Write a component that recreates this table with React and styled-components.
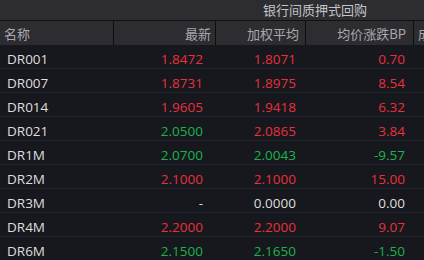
import React from "react";
import styled, { createGlobalStyle } from "styled-components";

const GlobalStyle = createGlobalStyle`
  html, body {
    margin: 0;
    padding: 0;
    background: #16181d;
    overflow: hidden;
  }
  body {
    font-family: "Open Sans", "Noto Sans CJK SC", sans-serif;
  }
`;

const COLS = "114px 102px 90px 108px 120px";

const Board = styled.div`
  width: 424px;
  height: 260px;
  overflow: hidden;
  background: #16181d;
`;

const GroupBar = styled.div`
  display: grid;
  grid-template-columns: 216px 198px 1fr;
  height: 20px;
  background: #2c2c31;
  border-bottom: 1px solid #111114;
`;

const GroupLabel = styled.div`
  grid-column: ${(p) => p.$col};
  display: flex;
  align-items: center;
  justify-content: center;
  font-family: "Noto Sans CJK SC", sans-serif;
  font-size: 13px;
  color: #c4c4c6;
  line-height: 20px;
`;

const HeadRow = styled.div`
  display: grid;
  grid-template-columns: ${COLS};
  height: 24px;
  background: #2c2c31;
`;

const HeadCell = styled.div`
  display: flex;
  align-items: center;
  justify-content: ${(p) => (p.$left ? "flex-start" : "flex-end")};
  padding: ${(p) => (p.$left ? "0 0 0 4px" : `0 ${p.$pad || 7}px 0 0`)};
  border-right: 1px solid #0e0e10;
  font-family: "Noto Sans CJK SC", sans-serif;
  font-size: 13px;
  color: #a9a9ad;
  white-space: nowrap;
  overflow: hidden;
  box-sizing: border-box;
`;

const Row = styled.div`
  display: grid;
  grid-template-columns: ${COLS};
  height: 24px;
  border-bottom: 1px solid #20232a;
  box-sizing: border-box;
`;

const Cell = styled.div`
  display: flex;
  align-items: center;
  justify-content: ${(p) => (p.$left ? "flex-start" : "flex-end")};
  padding: ${(p) => (p.$left ? "4px 0 0 7px" : `4px ${p.$pad || 10}px 0 0`)};
  font-size: 13.5px;
  color: ${(p) =>
    p.$tone === "up" ? "#e9303c" : p.$tone === "down" ? "#1fb24c" : "#dedede"};
  white-space: nowrap;
  box-sizing: border-box;
`;

const tone = (v) => (v > 0 ? "up" : v < 0 ? "down" : "flat");

const rows = [
  ["DR001", "1.8472", "1.8071", "0.70", 1, 1],
  ["DR007", "1.8731", "1.8975", "8.54", 1, 1],
  ["DR014", "1.9605", "1.9418", "6.32", 1, 1],
  ["DR021", "2.0500", "2.0865", "3.84", -1, 1],
  ["DR1M", "2.0700", "2.0043", "-9.57", -1, -1],
  ["DR2M", "2.1000", "2.1000", "15.00", 1, 1],
  ["DR3M", "-", "0.0000", "0.00", 0, 0],
  ["DR4M", "2.2000", "2.2000", "9.07", 1, 1],
  ["DR6M", "2.1500", "2.1650", "-1.50", -1, -1],
];

export default function App() {
  return (
    <Board>
      <GlobalStyle />
      <GroupBar>
        <GroupLabel $col={2}>银行间质押式回购</GroupLabel>
      </GroupBar>
      <HeadRow>
        <HeadCell $left>名称</HeadCell>
        <HeadCell $pad={4}>最新</HeadCell>
        <HeadCell $pad={6}>加权平均</HeadCell>
        <HeadCell $pad={7}>均价涨跌BP</HeadCell>
        <HeadCell $left>成交量</HeadCell>
      </HeadRow>
      {rows.map(([name, last, avg, bp, lastDir, avgDir]) => (
        <Row key={name}>
          <Cell $left>{name}</Cell>
          <Cell $pad={13} $tone={tone(lastDir)}>
            {last}
          </Cell>
          <Cell $pad={10} $tone={tone(avgDir)}>
            {avg}
          </Cell>
          <Cell $pad={9} $tone={tone(avgDir)}>
            {bp}
          </Cell>
          <Cell />
        </Row>
      ))}
    </Board>
  );
}
